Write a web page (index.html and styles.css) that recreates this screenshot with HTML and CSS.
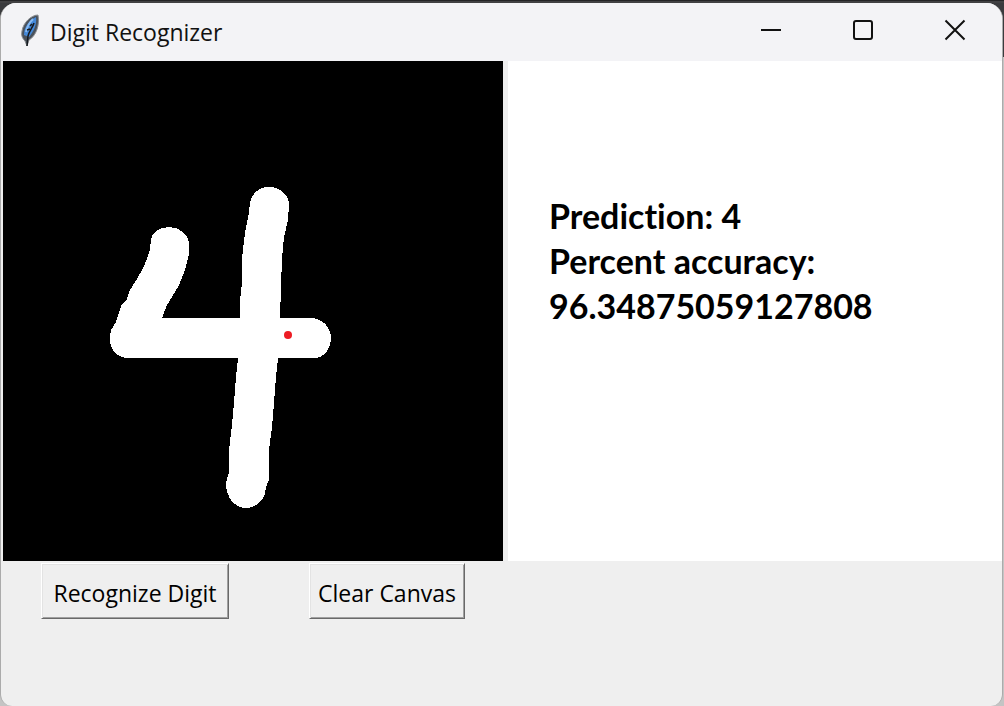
FILE: index.html
```html
<!DOCTYPE html>
<html lang="en">
<head>
<meta charset="utf-8">
<meta name="viewport" content="width=device-width, initial-scale=1">
<title>Digit Recognizer</title>
<link rel="stylesheet" href="styles.css">
</head>
<body class="desktop">
<div class="window">
  <header class="titlebar">
    <svg class="app-icon" viewBox="0 0 20 34" aria-hidden="true">
      <path d="M18 2C11 2 3 10 2 18C1 22 2 25 5 28L7 33L9 27C16 23 20 12 18 2Z" fill="#4a525c" stroke="#8b8e92" stroke-width="1"/>
      <path d="M16 4C10 7 4 13 4 22L9 24C14 18 17 11 16 4Z" fill="#4488d8"/>
      <path d="M13 6C9 10 7 14 6 19" fill="none" stroke="#86b9f2" stroke-width="2"/>
      <path d="M14 10C13 14 9 18 8 23L7 33M12 11L10 13M10 16L7 17" fill="none" stroke="#15191f" stroke-width="1.500"/>
    </svg>
    <h1 class="title">Digit Recognizer</h1>
    <div class="controls">
      <button class="control" type="button" aria-label="Minimize"><svg viewBox="0 0 22 22"><path d="M1 11H21"/></svg></button>
      <button class="control" type="button" aria-label="Maximize"><svg viewBox="0 0 22 22"><rect x="2" y="2" width="18" height="18" rx="2"/></svg></button>
      <button class="control" type="button" aria-label="Close"><svg viewBox="0 0 22 22"><path d="M1.500 1.500L20.500 20.500M20.500 1.500L1.500 20.500"/></svg></button>
    </div>
  </header>
  <main class="content">
    <div class="panes">
      <svg class="canvas" viewBox="0 0 500 500" role="img" aria-label="Handwritten digit">
        <g fill="#fff" shape-rendering="crispEdges">
          <path d="M166 166C156 166 149 172 148 178L147 188L144 198L140 207L134 218L127 229L124 238L119 243L113 261L108 269Q107 273 107 279C107 288 114 297 125 297H312C321 297 328 287 328 277C328 266 319 257 307 257H159L164 244L175 226C180 216 184 204 186 192V181C185 173 176 166 166 166Z"/>
          <path d="M266 126C256 126 248 133 247 141L246 152L242 172L239 197V222L237 239V257L235 297L233 316L231 342L229 364L226 389V411L223 422C223 437 232 447 243 447C254 447 263 438 263 426L266 419V389L269 366L271 342L273 316L275 297L277 257L278 226L279 197L281 176L285 159L286 144C286 134 277 126 266 126Z"/>
        </g>
        <circle cx="285" cy="274" r="4" fill="#ed1c24"/>
      </svg>
      <p class="result">Prediction: 4<br>Percent accuracy:<br>96.34875059127808</p>
    </div>
    <div class="actions">
      <button class="action" type="button">Recognize Digit</button>
      <button class="action" type="button">Clear Canvas</button>
    </div>
  </main>
</div>
</body>
</html>
```
FILE: styles.css
```css
* {
  box-sizing: border-box;
}

.desktop {
  margin: 0;
  padding: 3px 1px 0 0;
  min-height: 100vh;
  display: flex;
  background: linear-gradient(#242426 0 1px, #414143 1px 3px, #3a3b3e 3px 57px, #c4c4c4 57px);
}

.window {
  flex: 1;
  display: flex;
  flex-direction: column;
  overflow: hidden;
  border: solid #ababab;
  border-width: 0 1px;
  border-radius: 16px 16px 12px 12px;
  background: #efefef;
}

.titlebar {
  display: flex;
  align-items: center;
  height: 58px;
  padding: 0 1px 0 19px;
  background: #f3f3f6;
}

.app-icon {
  width: 20px;
  height: 34px;
  margin-bottom: 4px;
}

.title {
  margin: 0 auto 0 10px;
  color: #111;
  font: 400 23px/32px "Open Sans", "Noto Sans", sans-serif;
}

.controls {
  display: flex;
  align-self: stretch;
}

.control {
  display: grid;
  place-items: center;
  width: 92px;
  padding: 0 0 4px;
  border: 0;
  background: none;
}

.control svg {
  width: 22px;
  height: 22px;
  fill: none;
  stroke: #111;
  stroke-width: 2;
}

.content {
  padding-left: 2px;
}

.panes {
  display: grid;
  grid-template-columns: 500fr 494fr;
  gap: 5px;
}

.canvas {
  display: block;
  width: 100%;
  background: #000;
}

.result {
  margin: 0;
  padding: 132px 20px 0 41px;
  background: #fff;
  color: #000;
  font: 700 34px/45px Lato, "Open Sans", sans-serif;
  font-variant-ligatures: none;
}

.actions {
  display: grid;
  grid-template-columns: 188px 156px;
  gap: 80px;
  padding: 2px 38px;
}

.action {
  height: 56px;
  padding: 4px 0 0;
  border: 1px solid;
  border-color: #fff #696969 #696969 #fff;
  background: #efefef;
  box-shadow: inset 1px 1px #e3e3e3, inset -1px -1px #a0a0a0;
  color: #000;
  font: 400 23px/32px "Open Sans", "Noto Sans", sans-serif;
}
```
